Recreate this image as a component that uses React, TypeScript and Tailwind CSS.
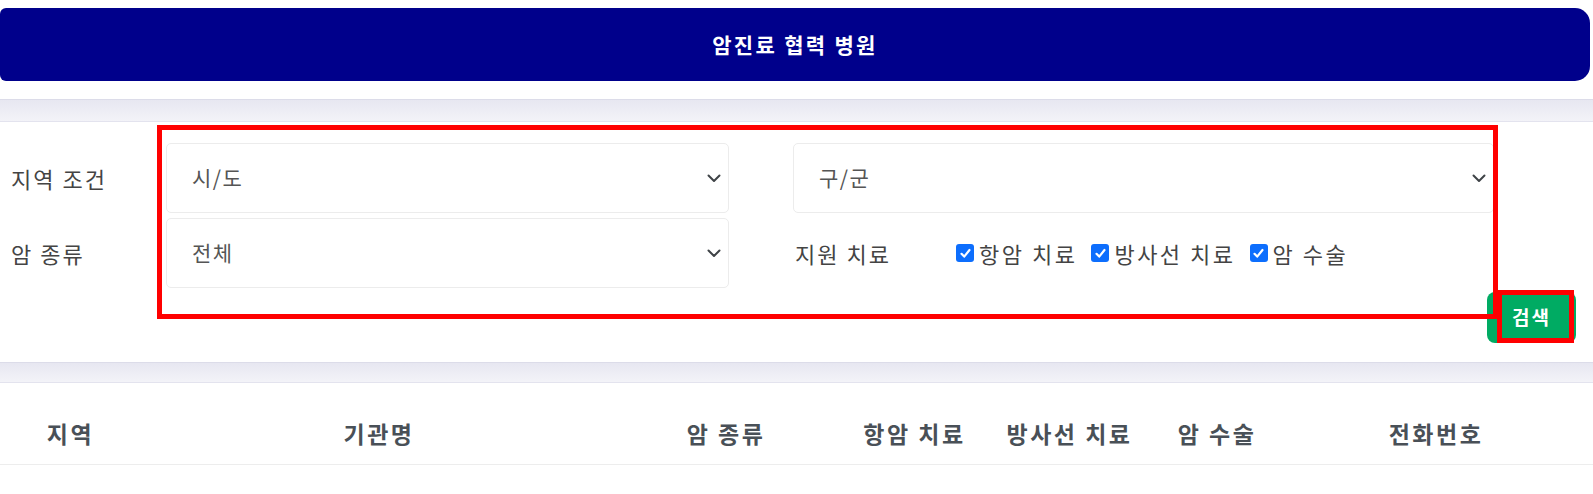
import React from "react";

const FONT = { fontFamily: '"Noto Sans CJK KR", "Noto Sans", sans-serif' };

function Chevron() {
  return (
    <svg width="14" height="9" viewBox="0 0 14 9" fill="none">
      <path d="M1.5 1.5 L7 7 L12.5 1.5" stroke="#3f4347" strokeWidth="2" strokeLinecap="round" strokeLinejoin="round" />
    </svg>
  );
}

function SelectBox({ value, className }: { value: string; className: string }) {
  return (
    <div className={`h-[70px] flex items-center justify-between pl-[25px] pr-[7px] bg-white border border-[#ececec] rounded-[5px] ${className}`}>
      <span className="text-[21px] tracking-[1.5px] text-[#555]">{value}</span>
      <Chevron />
    </div>
  );
}

function Check({ label }: { label: string }) {
  return (
    <label className="flex items-center gap-[5px]">
      <span className="w-[18px] h-[18px] rounded-[3px] bg-[#0d6efd] flex items-center justify-center">
        <svg width="13" height="13" viewBox="0 0 13 13" fill="none">
          <path d="M2.5 6.8 L5.2 9.6 L10.5 3" stroke="white" strokeWidth="2.2" strokeLinecap="round" strokeLinejoin="round" />
        </svg>
      </span>
      <span className="text-[22px] tracking-[2.5px] text-[#444]">{label}</span>
    </label>
  );
}

const COLS = [
  { name: "지역", w: "w-[141px]" },
  { name: "기관명", w: "w-[476px]" },
  { name: "암 종류", w: "w-[218px]" },
  { name: "항암 치료", w: "w-[159px]" },
  { name: "방사선 치료", w: "w-[151px]" },
  { name: "암 수술", w: "w-[144px]" },
  { name: "전화번호", w: "w-[294px]" },
];

export default function App() {
  return (
    <div className="w-[1593px] min-h-[494px] bg-white overflow-hidden" style={FONT}>
      {/* title bar */}
      <div className="pt-[8px] pr-[3px]">
        <div className="h-[73px] bg-[#00008b] rounded-r-[15px] rounded-l-[6px] flex items-center justify-center">
          <h1 className="text-white font-bold text-[21px] tracking-[2.3px]">암진료 협력 병원</h1>
        </div>
      </div>

      <div className="h-[18px]" />
      <div className="h-[23px] bg-gradient-to-b from-[#e7e7f1] to-[#f3f3f8] border-t border-[#dcdce9] border-b border-b-[#e3e3ee]" />

      {/* filter panel */}
      <div className="relative h-[240px] bg-white pt-[21px]">
        <div className="flex items-center h-[70px]">
          <div className="w-[166px] pl-[11px] text-[22px] tracking-[2px] text-[#444]">지역 조건</div>
          <SelectBox value="시/도" className="w-[563px]" />
          <SelectBox value="구/군" className="w-[701px] ml-[64px]" />
        </div>
        <div className="flex items-center h-[70px] mt-[5px]">
          <div className="w-[166px] pl-[11px] text-[22px] tracking-[2px] text-[#444]">암 종류</div>
          <SelectBox value="전체" className="w-[563px]" />
          <div className="ml-[66px] flex items-center">
            <span className="w-[161px] text-[22px] tracking-[2px] text-[#444]">지원 치료</span>
            <div className="flex items-center gap-[14px]">
              <Check label="항암 치료" />
              <Check label="방사선 치료" />
              <Check label="암 수술" />
            </div>
          </div>
        </div>
        <div className="flex justify-end mt-[4px] pr-[17px]">
          <button className="w-[89px] h-[51px] rounded-[8px] bg-[#00ab63] text-white font-bold text-[19px] tracking-[2px]">검색</button>
        </div>

        {/* annotation boxes */}
        <div className="absolute left-[157px] top-[3px] w-[1341px] h-[194px] border-[5px] border-[#ff0000] pointer-events-none" />
        <div className="absolute left-[1497px] top-[168px] w-[77px] h-[53px] border-[5px] border-[#ff0000] pointer-events-none" />
      </div>

      <div className="h-[21px] bg-gradient-to-b from-[#e7e7f1] to-[#f3f3f8] border-t border-[#dcdce9] border-b border-b-[#e3e3ee]" />

      {/* table header */}
      <div className="flex items-center h-[82px] pt-[20px] border-b border-[#ededed]">
        {COLS.map((c) => (
          <div key={c.name} className={`${c.w} text-center text-[23px] tracking-[2.5px] font-bold text-[#495057]`}>
            {c.name}
          </div>
        ))}
      </div>
    </div>
  );
}
